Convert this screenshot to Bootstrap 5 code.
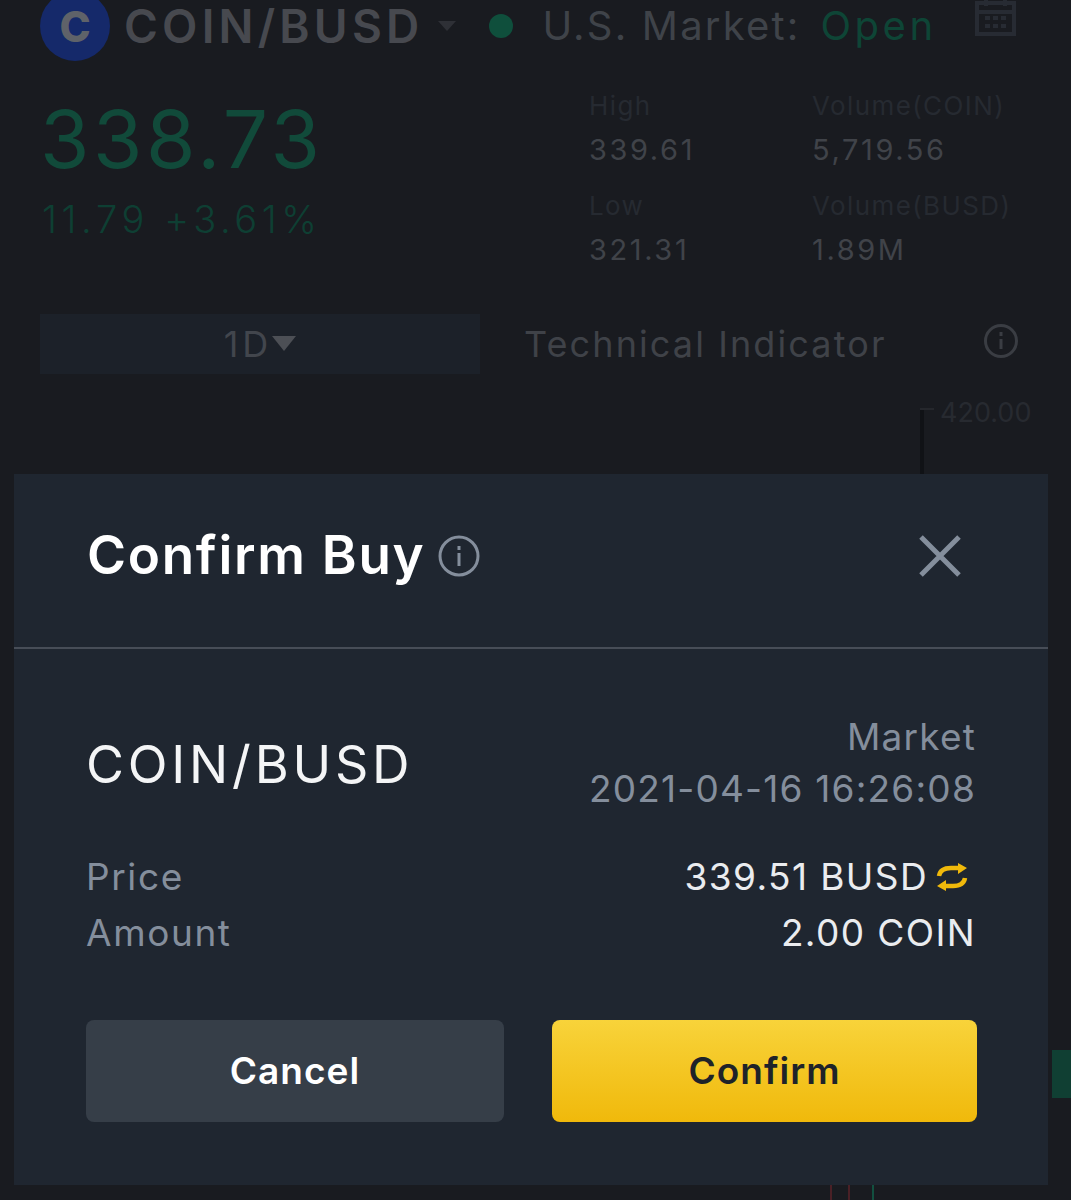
<!DOCTYPE html>
<html lang="en">
<head>
  <meta charset="UTF-8" />
  <meta name="viewport" content="width=device-width, initial-scale=1.0"/>
  <title>Confirm Buy</title>
  <link href="https://cdn.jsdelivr.net/npm/bootstrap@5.3.2/dist/css/bootstrap.min.css" rel="stylesheet">
  <style>
    html, body { height: 1200px; overflow: hidden; }
    body {
      background: #191b20;
      font-family: Inter, "Liberation Sans", sans-serif;
      position: relative;
    }
    .pair-head { height: 52px; padding-left: 40px; padding-right: 55px; }
    .coin-logo {
      width: 70px; height: 70px; flex: none; border-radius: 50%;
      background: #15296a; color: #5f6269;
      font-size: 42px; font-weight: 800;
    }
    .pair-name { color: #47494f; font-size: 46px; font-weight: 600; line-height: 52px; margin-left: 14px; letter-spacing: 4.2px; }
    .pair-caret { width: 0; height: 0; border: 9px solid transparent; border-top: 10px solid #2e3036; border-bottom: 0; margin-left: 15px; }
    .live-dot { width: 24px; height: 24px; border-radius: 50%; background: #0f4f3c; margin-left: 33px; }
    .market-label { color: #3f4349; font-size: 40px; line-height: 52px; margin-left: 29px; letter-spacing: 2.2px; }
    .market-open { color: #0e4536; font-size: 40px; line-height: 52px; margin-left: 20px; letter-spacing: 3.5px; }
    .cal-icon { margin-left: auto; margin-bottom: 18px; }
    .quote-row { padding: 27px 0 0 40px; }
    .last-price { color: #114a3a; font-size: 80px; font-weight: 400; line-height: 120px; letter-spacing: 3.6px; }
    .change-line { color: #0e3f33; font-size: 38px; font-weight: 300; line-height: 40px; letter-spacing: 4.6px; padding-left: 2px; }
    .stat-grid { width: 437px; margin-left: auto; margin-right: 45px; display: grid; grid-template-columns: 223px 1fr; margin-top: 9px; }
    .stat-label { color: #262a31; font-size: 26px; line-height: 36px; letter-spacing: 1.4px; }
    .stat-value { color: #404349; font-size: 29px; line-height: 52px; margin-bottom: 12px; letter-spacing: 2.6px; }
    .tool-row { padding: 0 52px 0 40px; margin-top: 26px; }
    .frame-pick {
      width: 440px; height: 60px; background: #1c2129; color: #42464d;
      font-size: 36px; line-height: 60px; letter-spacing: 4px;
    }
    .frame-caret { width: 0; height: 0; border: 12px solid transparent; border-top: 15px solid #4c4f55; border-bottom: 0; margin-bottom: 2px; }
    .tool-name { color: #3f4248; font-size: 36px; margin-left: 44px; letter-spacing: 2.1px; }
    .tool-info { margin-bottom: 6px; }
    .chart-area { position: relative; height: 826px; }
    .axis-tick { position: absolute; left: 920px; top: 34px; width: 4px; height: 66px; background: #101216; }
    .axis-tick::before { content: ""; position: absolute; left: 0; top: 0; width: 14px; height: 2px; background: #25272c; }
    .axis-price { position: absolute; left: 940px; top: 22px; color: #272a30; font-size: 27px; line-height: 34px; }
    .candle-up { position: absolute; left: 1052px; top: 676px; width: 19px; height: 48px; background: #103f33; }
    .wick-a { position: absolute; left: 830px; top: 810px; width: 2px; height: 16px; background: #4a2026; }
    .wick-b { position: absolute; left: 848px; top: 810px; width: 2px; height: 16px; background: #4a2026; }
    .wick-c { position: absolute; left: 872px; top: 810px; width: 2px; height: 16px; background: #125040; }

    .buy-sheet {
      position: absolute; left: 14px; top: 474px; width: 1034px; height: 711px;
      background: #1f2630; border: 0; border-radius: 0; color: #eaecef;
    }
    .buy-head { height: 175px; padding: 0 86px 10px 73px; border-bottom: 2px solid #474d57; }
    .buy-title { font-size: 53px; font-weight: 600; color: #fff; line-height: 1; margin: 0; letter-spacing: 1.7px; }
    .buy-info { margin-left: 13px; }
    .buy-body { padding: 0 72px; }
    .buy-pair { font-size: 52px; color: #f4f5f6; line-height: 60px; letter-spacing: 3.8px; margin-top: 3px; }
    .order-top { margin-top: 62px; }
    .order-meta { color: #848e9c; font-size: 37px; line-height: 52px; text-align: right; letter-spacing: 1.2px; }
    .order-line { font-size: 37px; line-height: 56px; }
    .order-key { color: #848e9c; letter-spacing: 1.6px; }
    .order-val { color: #eaecef; letter-spacing: 1.4px; }
    .order-list { margin-top: 34px; }
    .btn-row { margin-top: 59px; gap: 48px; }
    .sheet-btn {
      height: 102px; font-size: 37px; font-weight: 600; border: 0; border-radius: 8px; letter-spacing: 1px;
    }
    .sheet-cancel { flex: 0 0 418px; background: #363e48; color: #fff; }
    .sheet-cancel:hover { background: #363e48; color: #fff; }
    .sheet-confirm { flex: 0 0 425px; background: linear-gradient(180deg, #f8d33a, #f0b90b); color: #1e2329; }
    .sheet-confirm:hover { background: linear-gradient(180deg, #f8d33a, #f0b90b); color: #1e2329; }
  </style>
</head>
<body>
  <div class="d-flex align-items-center pair-head">
    <div class="coin-logo d-flex align-items-center justify-content-center"><span>C</span></div>
    <div class="pair-name">COIN/BUSD</div>
    <div class="pair-caret"></div>
    <div class="live-dot"></div>
    <div class="market-label">U.S. Market:</div>
    <div class="market-open">Open</div>
    <svg class="cal-icon" width="41" height="38" viewBox="0 0 41 38" fill="none" stroke="#272b33" stroke-width="4">
      <rect x="2" y="5" width="37" height="31"/>
      <path d="M11 0v8M30 0v8M2 14h37"/>
      <path d="M10 20h5M18 20h5M26 20h5M10 28h5M18 28h5M26 28h5"/>
    </svg>
  </div>

  <div class="d-flex quote-row">
    <div>
      <div class="last-price">338.73</div>
      <div class="change-line">11.79 +3.61%</div>
    </div>
    <div class="stat-grid">
      <div><div class="stat-label">High</div><div class="stat-value">339.61</div></div>
      <div><div class="stat-label">Volume(COIN)</div><div class="stat-value">5,719.56</div></div>
      <div><div class="stat-label">Low</div><div class="stat-value">321.31</div></div>
      <div><div class="stat-label">Volume(BUSD)</div><div class="stat-value">1.89M</div></div>
    </div>
  </div>

  <div class="d-flex align-items-center tool-row">
    <div class="frame-pick d-flex align-items-center justify-content-center">1D<span class="frame-caret"></span></div>
    <div class="tool-name">Technical Indicator</div>
    <svg class="ms-auto tool-info" width="36" height="36" viewBox="0 0 36 36" fill="none" stroke="#3a3d43" stroke-width="3">
      <circle cx="18" cy="18" r="15.5"/>
      <path d="M18 16v10M18 9v4"/>
    </svg>
  </div>

  <div class="chart-area">
    <div class="axis-tick"></div>
    <div class="axis-price">420.00</div>
    <div class="candle-up"></div>
    <div class="wick-a"></div>
    <div class="wick-b"></div>
    <div class="wick-c"></div>
  </div>

  <div class="modal-content buy-sheet">
    <div class="d-flex align-items-center buy-head">
      <h5 class="buy-title">Confirm Buy</h5>
      <svg class="buy-info" width="42" height="42" viewBox="0 0 42 42" fill="none" stroke="#848e9c" stroke-width="3">
        <circle cx="21" cy="21" r="19"/>
        <path d="M21 18v13M21 11v4"/>
      </svg>
      <svg class="ms-auto" width="44" height="44" viewBox="0 0 44 44" fill="none" stroke="#848e9c" stroke-width="5">
        <path d="M3 3l38 38M41 3L3 41"/>
      </svg>
    </div>
    <div class="buy-body">
      <div class="d-flex justify-content-between align-items-center order-top">
        <div class="buy-pair">COIN/BUSD</div>
        <div class="order-meta">Market<br>2021-04-16 16:26:08</div>
      </div>
      <div class="order-list">
        <div class="d-flex justify-content-between order-line">
          <span class="order-key">Price</span>
          <span class="order-val d-flex align-items-center">339.51 BUSD
            <svg class="ms-2 me-2" width="32" height="28" viewBox="0 0 32 28" fill="none" stroke="#f0b90b" stroke-width="4.5">
              <path d="M3 13C4 7 9 5 15 5h9M29 15c-1 6-6 8-12 8H8"/>
              <path d="M22 0l9 5-9 6zM10 17l-9 6 9 5z" fill="#f0b90b" stroke="none"/>
            </svg>
          </span>
        </div>
        <div class="d-flex justify-content-between order-line">
          <span class="order-key">Amount</span>
          <span class="order-val">2.00 COIN</span>
        </div>
      </div>
      <div class="d-flex btn-row">
        <button type="button" class="btn sheet-btn sheet-cancel">Cancel</button>
        <button type="button" class="btn sheet-btn sheet-confirm">Confirm</button>
      </div>
    </div>
  </div>
  <script src="https://cdn.jsdelivr.net/npm/bootstrap@5.3.2/dist/js/bootstrap.bundle.min.js"></script>
</body>
</html>
